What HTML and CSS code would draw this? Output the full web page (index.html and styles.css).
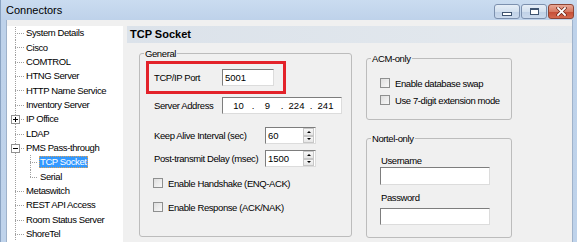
FILE: index.html
```html
<!DOCTYPE html>
<html lang="en">
  <head>
    <meta charset="UTF-8" />
    <title>Connectors</title>
    <link rel="stylesheet" href="styles.css">
  </head>
  <body>
    <div class="window">
      <!-- Title bar -->
      <div class="titlebar">
        <div class="title">Connectors</div>
        <div class="caption-buttons">
          <div class="cb"><span class="min-glyph"></span></div>
          <div class="cb"><span class="max-glyph"></span></div>
          <div class="cb close">
            <svg width="11" height="9" viewBox="0 0 11 9">
              <path d="M2 1 L9 8 M9 1 L2 8" stroke="#6b2317" stroke-width="3.2" stroke-linecap="square" />
              <path d="M2 1 L9 8 M9 1 L2 8" stroke="#fff" stroke-width="1.8" stroke-linecap="square" />
            </svg>
          </div>
        </div>
      </div>

      <div class="client">
        <!-- Tree -->
        <div class="tree">
          <div class="node"><span class="g first"></span><span class="label">System Details</span></div>
          <div class="node"><span class="g"></span><span class="label">Cisco</span></div>
          <div class="node"><span class="g"></span><span class="label">COMTROL</span></div>
          <div class="node"><span class="g"></span><span class="label">HTNG Server</span></div>
          <div class="node"><span class="g"></span><span class="label">HTTP Name Service</span></div>
          <div class="node"><span class="g"></span><span class="label">Inventory Server</span></div>
          <div class="node"><span class="g"><span class="box plus"></span></span><span class="label">IP Office</span></div>
          <div class="node"><span class="g"></span><span class="label">LDAP</span></div>
          <div class="node"><span class="g"><span class="box"></span></span><span class="label">PMS Pass-through</span></div>
          <div class="node"><span class="g pass"></span><span class="g child"></span><span class="label selected">TCP Socket</span></div>
          <div class="node"><span class="g pass"></span><span class="g child last"></span><span class="label">Serial</span></div>
          <div class="node"><span class="g"></span><span class="label">Metaswitch</span></div>
          <div class="node"><span class="g"></span><span class="label">REST API Access</span></div>
          <div class="node"><span class="g"></span><span class="label">Room Status Server</span></div>
          <div class="node"><span class="g"></span><span class="label">ShoreTel</span></div>
        </div>

        <!-- Settings -->
        <div class="content">
          <div class="header">TCP Socket</div>
          <div class="panel">
            <fieldset class="general">
              <legend>General</legend>
              <div class="highlight">
                <span class="lbl">TCP/IP Port</span>
                <input class="tb port" type="text" value="5001" />
              </div>
              <div class="row server">
                <span class="lbl">Server Address</span>
                <div class="tb ip">
                  <span class="seg">10</span><span class="dot">.</span>
                  <span class="seg">9</span><span class="dot">.</span>
                  <span class="seg">224</span><span class="dot">.</span>
                  <span class="seg">241</span>
                </div>
              </div>
              <div class="row keepalive">
                <span class="lbl wide">Keep Alive Interval (sec)</span>
                <div class="tb spin">
                  <span class="val">60</span>
                  <span class="arrows"><span class="up"><i></i></span><span class="down"><i></i></span></span>
                </div>
              </div>
              <div class="row delay">
                <span class="lbl wide">Post-transmit Delay (msec)</span>
                <div class="tb spin">
                  <span class="val">1500</span>
                  <span class="arrows"><span class="up"><i></i></span><span class="down"><i></i></span></span>
                </div>
              </div>
              <div class="check handshake"><span class="cbox"></span>Enable Handshake (ENQ-ACK)</div>
              <div class="check response"><span class="cbox"></span>Enable Response (ACK/NAK)</div>
            </fieldset>

            <div class="side">
              <fieldset class="acm">
                <legend>ACM-only</legend>
                <div class="check swap"><span class="cbox"></span>Enable database swap</div>
                <div class="check digit"><span class="cbox"></span>Use 7-digit extension mode</div>
              </fieldset>
              <fieldset class="nortel">
                <legend>Nortel-only</legend>
                <div class="field-label user">Username</div>
                <input class="tb cred user-box" type="text" value="" />
                <div class="field-label pass-label">Password</div>
                <input class="tb cred pass-box" type="password" value="" />
              </fieldset>
            </div>
          </div>
        </div>
      </div>
    </div>
  </body>
</html>
```

FILE: styles.css
```css
* {
  box-sizing: border-box;
}
body {
  margin: 0;
  width: 577px;
  height: 242px;
  overflow: hidden;
  font-family: "Liberation Sans", Arial, sans-serif;
  font-size: 9.5px;
  letter-spacing: -0.4px;
  white-space: nowrap;
  color: #000;
}
.window {
  height: 242px;
  display: flex;
  flex-direction: column;
  background: linear-gradient(#cadcf0, #bed2ea 20px, #bfd3eb);
  border-left: 1px solid #8aa3c2;
}

/* title bar */
.titlebar {
  height: 20px;
  flex: none;
  display: flex;
  align-items: flex-start;
}
.title {
  flex: 1;
  font-size: 11px;
  letter-spacing: 0;
  line-height: 21px;
  padding-left: 5px;
}
.caption-buttons {
  display: flex;
  gap: 1px;
  margin-top: 4px;
  margin-right: 3px;
}
.cb {
  width: 26px;
  height: 15px;
  border: 1px solid #7c90ae;
  border-radius: 3px;
  background: linear-gradient(#e6eef7, #d3e0ef 50%, #bfd0e6 51%, #cbdaed);
  display: flex;
  align-items: center;
  justify-content: center;
}
.cb.close {
  border-color: #8e4535;
  background: linear-gradient(#e8a897, #d67a63 50%, #c44b34 51%, #d5694f);
}
.min-glyph {
  width: 10px;
  height: 4px;
  margin-top: 4px;
  background: #fff;
  border: 1px solid #3f5470;
}
.max-glyph {
  width: 9px;
  height: 7px;
  background: #fff;
  border: 1px solid #3f5470;
  border-top-width: 2px;
}

/* client area */
.client {
  flex: 1;
  display: flex;
  gap: 4px;
  margin: 0 4px 0 5px;
  padding-top: 6px;
  background: #f0f0f0;
  border-left: 1px solid #9fb2ca;
  border-right: 1px solid #9fb2ca;
}

/* tree */
.tree {
  width: 116px;
  flex: none;
  background: #fff;
  padding-left: 8px;
}
.node {
  display: flex;
  height: 14.36px;
}
.g {
  width: 9px;
  flex: none;
  display: flex;
  align-items: flex-start;
  background-image: repeating-linear-gradient(#a0a0a0 0 1px, transparent 1px 2px),
    repeating-linear-gradient(90deg, #a0a0a0 0 1px, transparent 1px 2px);
  background-size: 1px 100%, 100% 1px;
  background-position: 0 0, 0 7px;
  background-repeat: no-repeat;
}
.g.first {
  background-size: 1px 8px, 100% 1px;
  background-position: 0 7px, 0 7px;
  background-repeat: repeat-y, no-repeat;
}
.g.pass {
  width: 15px;
  background-size: 1px 100%, 0 0;
}
.g.child {
  width: 8px;
}
.g.last {
  background-size: 1px 8px, 100% 1px;
}
.box {
  width: 9px;
  height: 9px;
  margin: 3px 0 0 -4px;
  border: 1px solid #919191;
  background: linear-gradient(#000, #000) center / 5px 1px no-repeat, #fff;
}
.box.plus {
  background: linear-gradient(#000, #000) center / 5px 1px no-repeat,
    linear-gradient(#000, #000) center / 1px 5px no-repeat, #fff;
}
.label {
  align-self: center;
  line-height: 12px;
  padding: 0 1px;
  margin-left: 1px;
}
.label.selected {
  background: #3399ff;
  color: #fff;
  outline: 1px dotted #d9a15a;
  outline-offset: -1px;
}

/* content */
.content {
  flex: 1;
}
.header {
  height: 17px;
  padding-left: 3px;
  background: linear-gradient(90deg, #dbe2ea, #e4e9ee);
  font-weight: bold;
  font-size: 11px;
  letter-spacing: 0;
  line-height: 17px;
}
.panel {
  display: flex;
  align-items: flex-start;
  gap: 14px;
  padding: 4px 0 0 12px;
}
fieldset {
  margin: 0;
  padding: 0;
  min-width: 0;
  border: 1px solid #bcbcbc;
  border-radius: 3px;
}
legend {
  margin-left: 4px;
  padding: 0 1px;
  line-height: 13px;
}
.general {
  width: 213px;
  height: 190px;
}
.highlight {
  display: flex;
  align-items: center;
  width: 140px;
  height: 33px;
  margin: 1px 0 0 6px;
  padding-left: 5px;
  border: 3px solid #e3222a;
}
.row {
  display: flex;
  align-items: center;
  margin-left: 14px;
}
.lbl {
  width: 68px;
  flex: none;
}
.lbl.wide {
  width: 111px;
}
.tb {
  height: 17px;
  padding: 0 2px;
  border: 1px solid;
  border-color: #7d7d7d #dcdcdc #dcdcdc #7d7d7d;
  background: #fff;
  font: inherit;
  letter-spacing: 0;
  color: #000;
  outline: none;
}
.port {
  width: 52px;
}
.server {
  margin-top: 3px;
}
.ip {
  width: 120px;
  display: flex;
  align-items: center;
  padding-left: 5px;
}
.seg {
  width: 21px;
  text-align: center;
}
.dot {
  width: 8px;
  text-align: center;
}
.keepalive {
  margin-top: 13px;
}
.delay {
  margin-top: 6px;
}
.spin {
  width: 51px;
  display: flex;
  align-items: center;
  padding: 0 1px 0 2px;
}
.val {
  flex: 1;
}
.arrows {
  width: 11px;
  height: 15px;
  display: flex;
  flex-direction: column;
}
.arrows span {
  flex: 1;
  display: flex;
  align-items: center;
  justify-content: center;
  border: 1px solid #c7c7c7;
  background: linear-gradient(#f7f7f7, #e6e6e6);
}
.up i {
  border-left: 2px solid transparent;
  border-right: 2px solid transparent;
  border-bottom: 2px solid #000;
}
.down i {
  border-left: 2px solid transparent;
  border-right: 2px solid transparent;
  border-top: 2px solid #000;
}
.check {
  display: flex;
  align-items: center;
  gap: 5px;
  height: 12px;
  margin-left: 13px;
}
.cbox {
  width: 10px;
  height: 10px;
  flex: none;
  border: 1px solid #8e8f8f;
  background: linear-gradient(135deg, #dedede, #f8f8f8);
}
.handshake {
  margin-top: 10px;
}
.response {
  margin-top: 12px;
}

/* right column */
.side {
  width: 146px;
  display: flex;
  flex-direction: column;
}
.acm {
  height: 68px;
  margin-top: 5px;
}
.swap {
  margin-top: 12px;
}
.digit {
  margin-top: 5px;
}
.nortel {
  height: 106px;
  margin-top: 12px;
}
.field-label {
  margin-left: 14px;
  line-height: 12px;
}
.user {
  margin-top: 10px;
}
.cred {
  display: block;
  width: 110px;
  margin-left: 13px;
}
.user-box {
  height: 18px;
}
.pass-label {
  margin-top: 7px;
}
.pass-box {
  margin-top: 4px;
}
```
